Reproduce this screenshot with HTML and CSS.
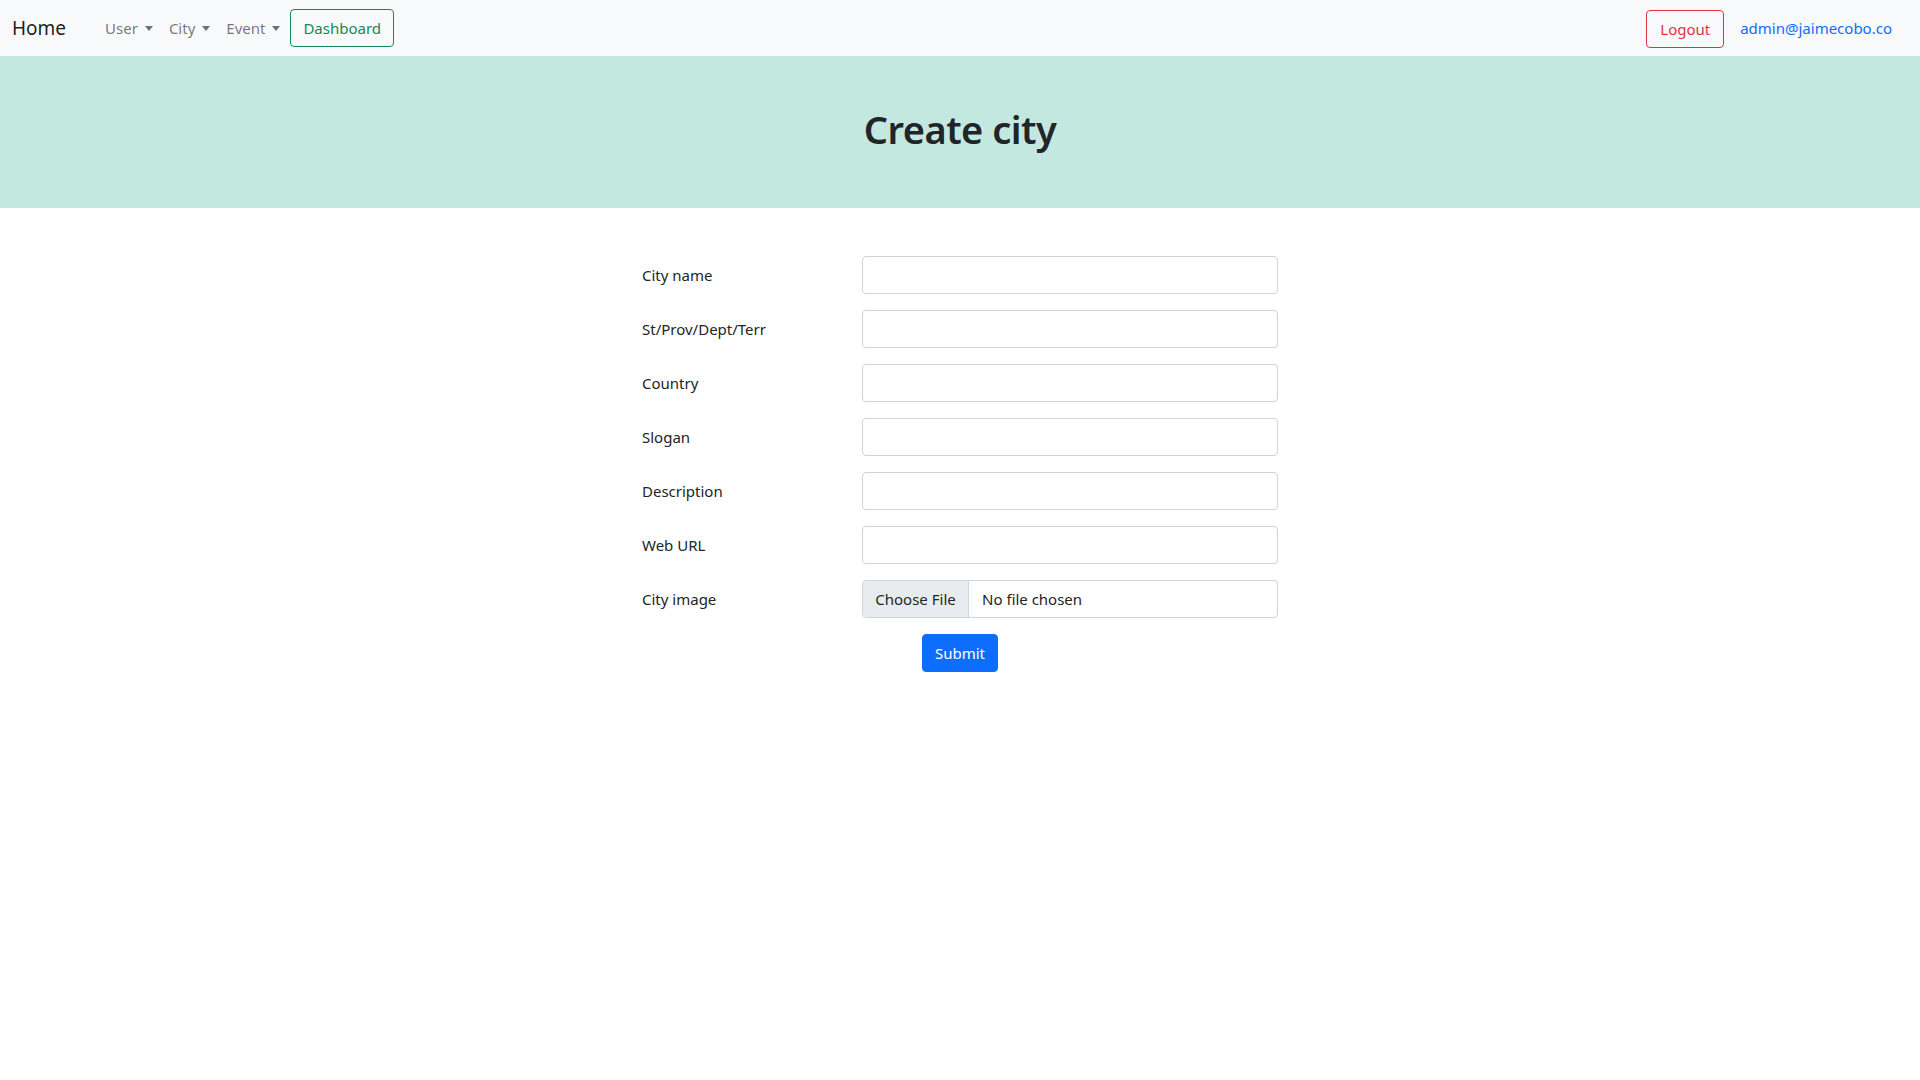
FILE: index.html
```html
<!DOCTYPE html>
<html lang="en">
<head>
<meta charset="utf-8">
<title>Create city</title>
<link rel="stylesheet" href="styles.css">
</head>
<body>
<nav class="navbar">
  <div class="nav-left">
    <a class="brand" href="#">Home</a>
    <ul class="nav-links">
      <li><a class="nav-link dropdown" href="#">User</a></li>
      <li><a class="nav-link dropdown" href="#">City</a></li>
      <li><a class="nav-link dropdown" href="#">Event</a></li>
      <li><a class="btn btn-success-outline" href="#">Dashboard</a></li>
    </ul>
  </div>
  <div class="nav-right">
    <a class="btn btn-danger-outline" href="#">Logout</a>
    <a class="user-link" href="#">admin@jaimecobo.co</a>
  </div>
</nav>
<header class="hero">
  <h1>Create city</h1>
</header>
<main class="container">
  <form class="form">
    <div class="row">
      <label class="label">City name</label>
      <div class="field"><input class="input" type="text"></div>
    </div>
    <div class="row">
      <label class="label">St/Prov/Dept/Terr</label>
      <div class="field"><input class="input" type="text"></div>
    </div>
    <div class="row">
      <label class="label">Country</label>
      <div class="field"><input class="input" type="text"></div>
    </div>
    <div class="row">
      <label class="label">Slogan</label>
      <div class="field"><input class="input" type="text"></div>
    </div>
    <div class="row">
      <label class="label">Description</label>
      <div class="field"><input class="input" type="text"></div>
    </div>
    <div class="row">
      <label class="label">Web URL</label>
      <div class="field"><input class="input" type="text"></div>
    </div>
    <div class="row">
      <label class="label">City image</label>
      <div class="field">
        <div class="file-input">
          <span class="file-btn">Choose File</span>
          <span class="file-name">No file chosen</span>
        </div>
      </div>
    </div>
    <div class="submit-row">
      <button class="btn-primary" type="button">Submit</button>
    </div>
  </form>
</main>
</body>
</html>
```
FILE: styles.css
```css
* { box-sizing: border-box; }
html, body { margin: 0; padding: 0; }
body {
  font-family: "Noto Sans", "Open Sans", "Liberation Sans", sans-serif;
  font-size: 16px;
  line-height: 1.5;
  color: #212529;
  background: #fff;
}
a { text-decoration: none; }

.navbar {
  height: 56px;
  background: #f8f9fa;
  display: flex;
  align-items: center;
  justify-content: space-between;
  padding: 0 28px 0 12px;
}
.nav-left, .nav-right { display: flex; align-items: center; }
.brand {
  font-size: 19px;
  color: rgba(0,0,0,.9);
  margin-right: 31px;
  line-height: 30px;
}
.nav-links { list-style: none; margin: 0; padding: 0; display: flex; align-items: center; }
.nav-link {
  display: block;
  padding: 8px 8px;
  font-size: 15px;
  color: rgba(0,0,0,.55);
}
.dropdown::after {
  content: "";
  display: inline-block;
  margin-left: 7px;
  vertical-align: 3px;
  border-top: 5px solid;
  border-left: 4.5px solid transparent;
  border-right: 4.5px solid transparent;
}
.btn {
  display: inline-block;
  font-size: 15px;
  line-height: 22px;
  padding: 7px 12px;
  border-radius: 4px;
  border: 1px solid;
}
.btn-success-outline { color: #198754; border-color: #198754; margin-left: 2px; }
.btn-danger-outline { color: #dc3545; border-color: #dc3545; margin-top: 2px; padding: 7px 13px; }
.user-link { color: #0d6efd; margin-left: 16px; font-size: 15px; }

.hero {
  background: #c3e8df;
  height: 152px;
  display: flex;
  justify-content: center;
  padding-top: 51px;
}
.hero h1 {
  margin: 0;
  font-size: 38px;
  font-weight: 600;
  line-height: 1.2;
  letter-spacing: -0.5px;
}

.container {
  width: 660px;
  margin: 0 auto;
  padding-top: 48px;
}
.row {
  display: flex;
  align-items: center;
  margin-bottom: 16px;
}
.label {
  width: 220px;
  padding: 0 12px;
  font-size: 15px;
}
.field {
  width: 440px;
  padding: 0 12px;
}
.input {
  display: block;
  width: 100%;
  height: 38px;
  border: 1px solid #ced4da;
  border-radius: 4px;
  background: #fff;
  font: inherit;
}
.file-input {
  display: flex;
  height: 38px;
  border: 1px solid #ced4da;
  border-radius: 4px;
  overflow: hidden;
  font-size: 15px;
  align-items: stretch;
}
.file-btn {
  background: #e9ecef;
  border-right: 1px solid #ced4da;
  padding: 0 11px;
  display: flex;
  align-items: center;
  width: 106px;
  justify-content: center;
}
.file-name { display: flex; align-items: center; padding-left: 13px; }
.submit-row { display: flex; justify-content: center; }
.btn-primary {
  background: #0d6efd;
  color: #fff;
  border: 1px solid #0d6efd;
  border-radius: 4px;
  font: inherit;
  font-size: 15px;
  height: 38px;
  width: 76px;
  padding: 0;
}
```
